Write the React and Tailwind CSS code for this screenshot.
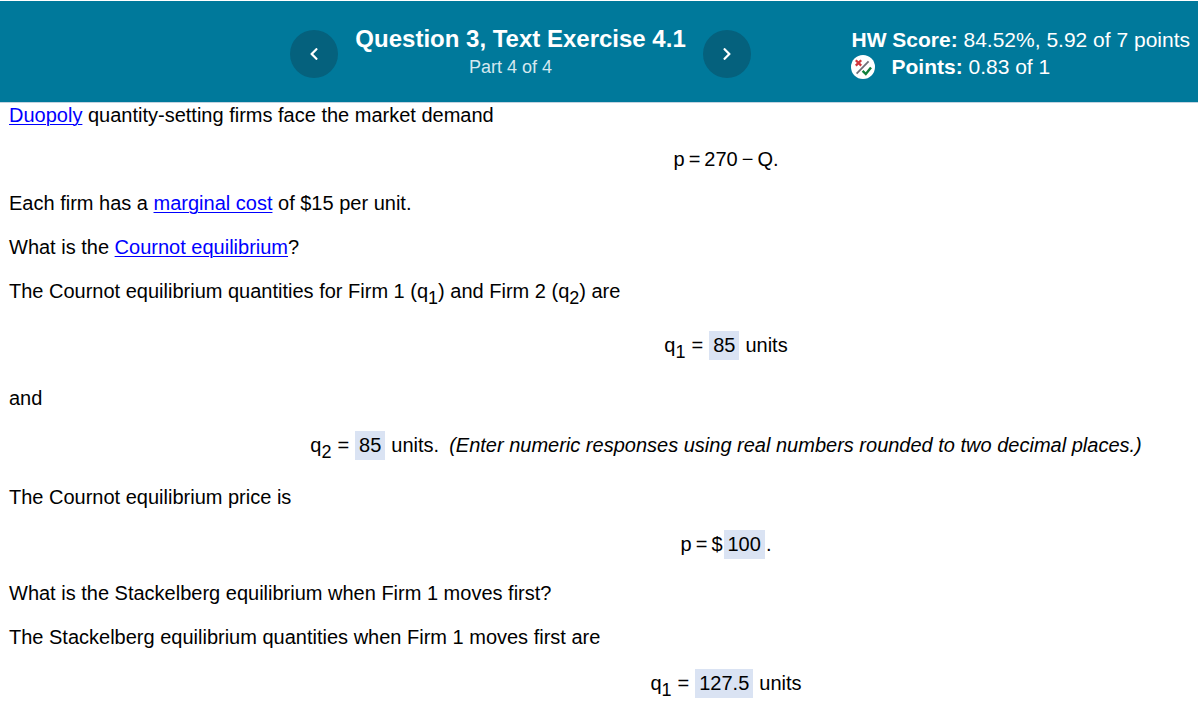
import { FaChevronLeft, FaChevronRight } from 'react-icons/fa'

function NavButton({ label, children }) {
  return (
    <button
      type="button"
      aria-label={label}
      className="flex size-12 shrink-0 items-center justify-center rounded-full bg-[#05617d] text-white"
    >
      {children}
    </button>
  )
}

function PartialCreditIcon() {
  return (
    <svg viewBox="0 0 24 24" className="size-6 shrink-0" fill="none" aria-hidden="true">
      <circle cx="12" cy="12" r="12" fill="#fff" />
      <path d="M4.8 5.2l5.4 5.4M10.2 5.2l-5.4 5.4" stroke="#d0353c" strokeWidth="2.3" />
      <path d="M5.6 18.6L17.6 6.4" stroke="#6f6f78" strokeWidth="1.8" />
      <path d="M11.6 15.8l3.2 3.2 5.2-6.6" stroke="#10803c" strokeWidth="2.4" />
    </svg>
  )
}

function Header() {
  return (
    <header className="mt-px flex items-start justify-between border-b border-[#c3d3e0] bg-[#00799b] pr-2 text-white">
      <nav className="ml-[24.4%] flex items-center gap-[17px] pt-[29px] pb-6" aria-label="Questions">
        <NavButton label="Previous question">
          <FaChevronLeft className="size-3.5" />
        </NavButton>
        <div className="-mt-1.5 -mb-1">
          <h1 className="text-2xl leading-7 font-bold whitespace-nowrap">Question 3, Text Exercise 4.1</h1>
          <p className="pr-5 text-center text-lg leading-7 text-[#d5e8ef]">Part 4 of 4</p>
        </div>
        <NavButton label="Next question">
          <FaChevronRight className="size-3.5" />
        </NavButton>
      </nav>
      <div className="pt-[25px] text-[21px] leading-[27px] whitespace-nowrap">
        <p><b>HW Score:</b> 84.52%, 5.92 of 7 points</p>
        <p className="flex items-center gap-4">
          <PartialCreditIcon />
          <span><b>Points:</b> 0.83 of 1</span>
        </p>
      </div>
    </header>
  )
}

function Term({ children }) {
  return (
    <a href="#" className="text-[#0000ff] underline decoration-1 underline-offset-2">{children}</a>
  )
}

function Quantity({ n }) {
  return (
    <span>q<sub className="static align-[-6px] text-[18px] leading-none">{n}</sub></span>
  )
}

function Answer({ label, value }) {
  return (
    <input
      type="text"
      readOnly
      aria-label={label}
      value={value}
      className="field-sizing-content h-[29px] bg-[#dae3f3] px-1 text-center outline-none"
    />
  )
}

function Equation({ children, className = 'min-h-6 gap-1' }) {
  return (
    <div className={`flex items-baseline justify-center pl-[254px] whitespace-nowrap ${className}`}>
      {children}
    </div>
  )
}

export default function App() {
  return (
    <div className="bg-white font-['Liberation_Sans',Arial,sans-serif] text-black">
      <Header />
      <main className="flex flex-col gap-5 px-[9px] text-xl leading-6">
        <p><Term>Duopoly</Term> quantity-setting firms face the market demand</p>
        <Equation>
          <span>p</span>
          <span>=</span>
          <span>270</span>
          <span>−</span>
          <span>Q.</span>
        </Equation>
        <p>Each firm has a <Term>marginal cost</Term> of $15 per unit.</p>
        <p>What is the <Term>Cournot equilibrium</Term>?</p>
        <p className="h-8">
          The Cournot equilibrium quantities for Firm 1 (<Quantity n="1" />) and Firm 2 (<Quantity n="2" />) are
        </p>
        <Equation className="h-[35px] gap-[6px]">
          <Quantity n="1" />
          <span>=</span>
          <Answer label="Cournot quantity of Firm 1" value="85" />
          <span>units</span>
        </Equation>
        <p>and</p>
        <Equation className="h-[35px] gap-[6px] pt-px">
          <Quantity n="2" />
          <span>=</span>
          <Answer label="Cournot quantity of Firm 2" value="85" />
          <span>units.</span>
          <i className="pl-1">(Enter numeric responses using real numbers rounded to two decimal places.)</i>
        </Equation>
        <p>The Cournot equilibrium price is</p>
        <Equation className="h-8 gap-1 pt-px">
          <span>p</span>
          <span>=</span>
          <span className="flex items-baseline gap-px">
            <span>$</span>
            <Answer label="Cournot price" value="100" />
            <span>.</span>
          </span>
        </Equation>
        <p>What is the Stackelberg equilibrium when Firm 1 moves first?</p>
        <p>The Stackelberg equilibrium quantities when Firm 1 moves first are</p>
        <Equation className="h-[35px] gap-[6px]">
          <Quantity n="1" />
          <span>=</span>
          <Answer label="Stackelberg quantity of Firm 1" value="127.5" />
          <span>units</span>
        </Equation>
      </main>
    </div>
  )
}
